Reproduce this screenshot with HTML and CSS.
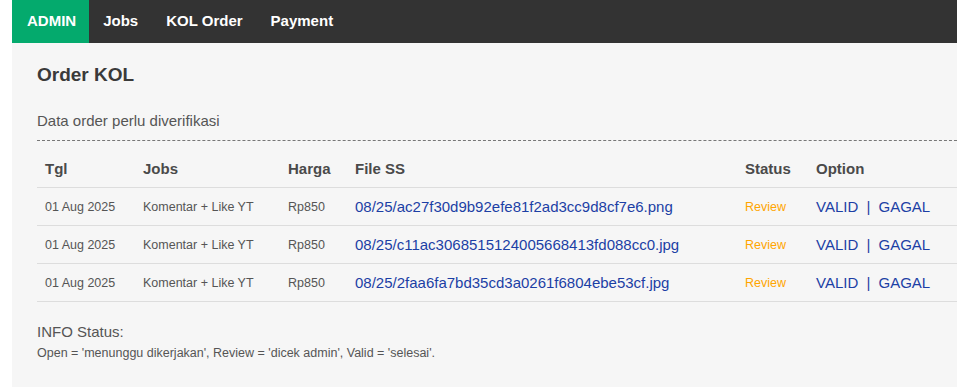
FILE: index.html
```html
<!DOCTYPE html>
<html lang="id">
<head>
    <meta charset="UTF-8">
    <meta name="viewport" content="width=device-width, initial-scale=1.0">
    <title>Order KOL</title>
    <link rel="stylesheet" href="styles.css">
</head>
<body>
    <div class="page">
        <nav class="topnav">
            <a class="active" href="#">ADMIN</a>
            <a href="#">Jobs</a>
            <a href="#">KOL Order</a>
            <a href="#">Payment</a>
        </nav>

        <div class="card">
            <h3>Order KOL</h3>
            <p class="subtitle">Data order perlu diverifikasi</p>

            <table class="orders">
                <thead>
                    <tr>
                        <th class="col-tgl">Tgl</th>
                        <th class="col-jobs">Jobs</th>
                        <th class="col-harga">Harga</th>
                        <th class="col-file">File SS</th>
                        <th class="col-status">Status</th>
                        <th>Option</th>
                    </tr>
                </thead>
                <tbody>
                    <tr>
                        <td class="small">01 Aug 2025</td>
                        <td class="small">Komentar + Like YT</td>
                        <td class="small">Rp850</td>
                        <td><a href="#">08/25/ac27f30d9b92efe81f2ad3cc9d8cf7e6.png</a></td>
                        <td class="small status">Review</td>
                        <td><a href="#">VALID</a> <span class="sep">|</span> <a href="#">GAGAL</a></td>
                    </tr>
                    <tr>
                        <td class="small">01 Aug 2025</td>
                        <td class="small">Komentar + Like YT</td>
                        <td class="small">Rp850</td>
                        <td><a href="#">08/25/c11ac3068515124005668413fd088cc0.jpg</a></td>
                        <td class="small status">Review</td>
                        <td><a href="#">VALID</a> <span class="sep">|</span> <a href="#">GAGAL</a></td>
                    </tr>
                    <tr>
                        <td class="small">01 Aug 2025</td>
                        <td class="small">Komentar + Like YT</td>
                        <td class="small">Rp850</td>
                        <td><a href="#">08/25/2faa6fa7bd35cd3a0261f6804ebe53cf.jpg</a></td>
                        <td class="small status">Review</td>
                        <td><a href="#">VALID</a> <span class="sep">|</span> <a href="#">GAGAL</a></td>
                    </tr>
                </tbody>
            </table>

            <div class="info">
                <div class="info-title">INFO Status:</div>
                <div class="info-text">Open = 'menunggu dikerjakan', Review = 'dicek admin', Valid = 'selesai'.</div>
            </div>
        </div>
    </div>
</body>
</html>
```

FILE: styles.css
```css
* {
    margin: 0;
    padding: 0;
    box-sizing: border-box;
}

body {
    font-family: 'Liberation Sans', Arial, sans-serif;
    background: #ffffff;
    color: #555;
    overflow: hidden;
}

.page {
    margin-left: 12px;
    width: 980px;
}

.topnav {
    display: flex;
    background: #333;
    height: 43px;
}

.topnav a {
    color: #fff;
    font-size: 15px;
    font-weight: bold;
    text-decoration: none;
    padding: 12px 14px 0 14px;
    line-height: 18px;
}

.topnav a.active {
    background: #04aa6d;
    padding-left: 15px;
    padding-right: 13px;
}

.card {
    background: #f6f6f6;
    padding: 21px 25px 30px 25px;
    min-height: 344px;
}

h3 {
    font-size: 19px;
    line-height: 22px;
    color: #3a3a3a;
}

.subtitle {
    font-size: 15px;
    line-height: 18px;
    margin-top: 26px;
    padding-bottom: 10px;
    border-bottom: 1px dashed #777;
}

.orders {
    width: 100%;
    border-collapse: collapse;
    margin-top: 10px;
}

.orders th {
    text-align: left;
    font-size: 15px;
    line-height: 18px;
    padding: 9px 8px;
    color: #4a4a4a;
    border-bottom: 1px solid #ddd;
}

.orders td {
    font-size: 15px;
    line-height: 18px;
    padding: 10px 8px 9px 8px;
    border-bottom: 1px solid #ddd;
    white-space: nowrap;
}

.orders td.small {
    font-size: 12.5px;
}

.col-tgl { width: 98px; }
.col-jobs { width: 145px; }
.col-harga { width: 67px; }
.col-file { width: 390px; }
.col-status { width: 71px; }

.orders a {
    color: #1c3fa5;
    text-decoration: none;
}

.status {
    color: #ffa500;
}

.sep {
    color: #1c3fa5;
    padding: 0 4px;
}

.info {
    margin-top: 21px;
}

.info-title {
    font-size: 15px;
    line-height: 18px;
}

.info-text {
    font-size: 12.5px;
    line-height: 15px;
    margin-top: 5px;
}
```
